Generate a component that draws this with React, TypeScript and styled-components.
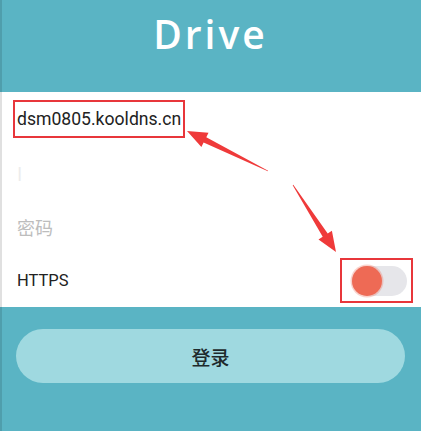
import React from "react";
import styled, { createGlobalStyle } from "styled-components";

const Global = createGlobalStyle`
  html, body { margin: 0; padding: 0; background: #5ab4c4; }
  body { font-family: Roboto, "Noto Sans", "Noto Sans CJK SC", sans-serif; }
`;

const Page = styled.div`
  position: relative;
  width: 421px;
  height: 431px;
  display: flex;
  flex-direction: column;
  background: #5ab4c4;
  overflow: hidden;
  &::before {
    content: "";
    position: absolute;
    left: 0;
    top: 0;
    bottom: 0;
    width: 2px;
    background: rgba(0, 0, 0, 0.12);
  }
`;

const Header = styled.header`
  height: 92px;
  display: flex;
  justify-content: center;
  align-items: flex-start;
  padding-top: 11px;
  box-sizing: border-box;
`;

const Title = styled.h1`
  margin: 0;
  color: #ffffff;
  font-family: "Open Sans", Lato, sans-serif;
  font-weight: 600;
  font-size: 39px;
  line-height: 46px;
  letter-spacing: 3px;
`;

const Form = styled.section`
  background: #ffffff;
  height: 215px;
  display: flex;
  flex-direction: column;
`;

const Row = styled.div<{ $h: number; $pad?: number }>`
  height: ${(p) => p.$h}px;
  display: flex;
  align-items: center;
  justify-content: space-between;
  padding-left: ${(p) => p.$pad ?? 17}px;
  padding-right: 8px;
  box-sizing: border-box;
`;

const Marked = styled.span`
  display: inline-flex;
  align-items: center;
  height: 38px;
  padding: 0 2px 0 2px;
  border: 2px solid #e8363b;
  box-sizing: border-box;
`;

const Value = styled.span`
  font-size: 17.6px;
  color: #222222;
`;

const Placeholder = styled.span<{ $faint?: boolean }>`
  font-size: 18px;
  color: ${(p) => (p.$faint ? "#ececec" : "#bdbdbd")};
  font-family: "Noto Sans CJK SC", "Noto Sans", sans-serif;
`;

const Label = styled.span`
  font-size: 16.5px;
  color: #222222;
`;

const ToggleMark = styled.div`
  width: 73px;
  height: 45px;
  border: 2px solid #e8363b;
  box-sizing: border-box;
  display: flex;
  align-items: center;
  justify-content: flex-end;
  padding-right: 4px;
`;

const Track = styled.div`
  width: 55px;
  height: 30px;
  border-radius: 15px;
  background: #e6e6ea;
  position: relative;
`;

const Knob = styled.div`
  position: absolute;
  left: 0;
  top: 0;
  width: 30px;
  height: 30px;
  border-radius: 50%;
  background: #ee6a55;
  box-shadow: 0 0 0 1.5px rgba(238, 106, 85, 0.3);
`;

const Footer = styled.section`
  flex: 1;
  padding: 22px 16px 0 16px;
`;

const Button = styled.button`
  width: 100%;
  height: 54px;
  border: none;
  border-radius: 27px;
  background: #9fd9e0;
  color: #1e2a2c;
  font-family: "Noto Sans CJK SC", sans-serif;
  font-size: 19px;
  font-weight: 500;
  cursor: pointer;
`;

const Arrows = styled.svg`
  position: absolute;
  left: 0;
  top: 0;
  pointer-events: none;
`;

function Arrow({ x1, y1, x2, y2 }: { x1: number; y1: number; x2: number; y2: number }) {
  const dx = x2 - x1;
  const dy = y2 - y1;
  const len = Math.hypot(dx, dy);
  const ux = dx / len;
  const uy = dy / len;
  const px = -uy;
  const py = ux;
  const head = 20;
  const hw = 8;
  const sw = 3;
  const bx = x2 - ux * head;
  const by = y2 - uy * head;
  const pts = [
    [x1 + px * 0.3, y1 + py * 0.3],
    [bx + px * sw, by + py * sw],
    [bx + px * hw, by + py * hw],
    [x2, y2],
    [bx - px * hw, by - py * hw],
    [bx - px * sw, by - py * sw],
    [x1 - px * 0.3, y1 - py * 0.3],
  ]
    .map((p) => p.map((v) => v.toFixed(1)).join(","))
    .join(" ");
  return <polygon points={pts} fill="#ef3a3a" />;
}

export default function App() {
  return (
    <>
      <Global />
      <Page>
        <Header>
          <Title>Drive</Title>
        </Header>
        <Form>
          <Row $h={54} $pad={13}>
            <Marked>
              <Value>dsm0805.kooldns.cn</Value>
            </Marked>
          </Row>
          <Row $h={54}>
            <Placeholder $faint>I</Placeholder>
          </Row>
          <Row $h={54}>
            <Placeholder>密码</Placeholder>
          </Row>
          <Row $h={53}>
            <Label>HTTPS</Label>
            <ToggleMark>
              <Track>
                <Knob />
              </Track>
            </ToggleMark>
          </Row>
        </Form>
        <Footer>
          <Button>登录</Button>
        </Footer>
        <Arrows width={421} height={431} viewBox="0 0 421 431">
          <Arrow x1={268} y1={171} x2={187} y2={131} />
          <Arrow x1={293} y1={185} x2={336} y2={252} />
        </Arrows>
      </Page>
    </>
  );
}
